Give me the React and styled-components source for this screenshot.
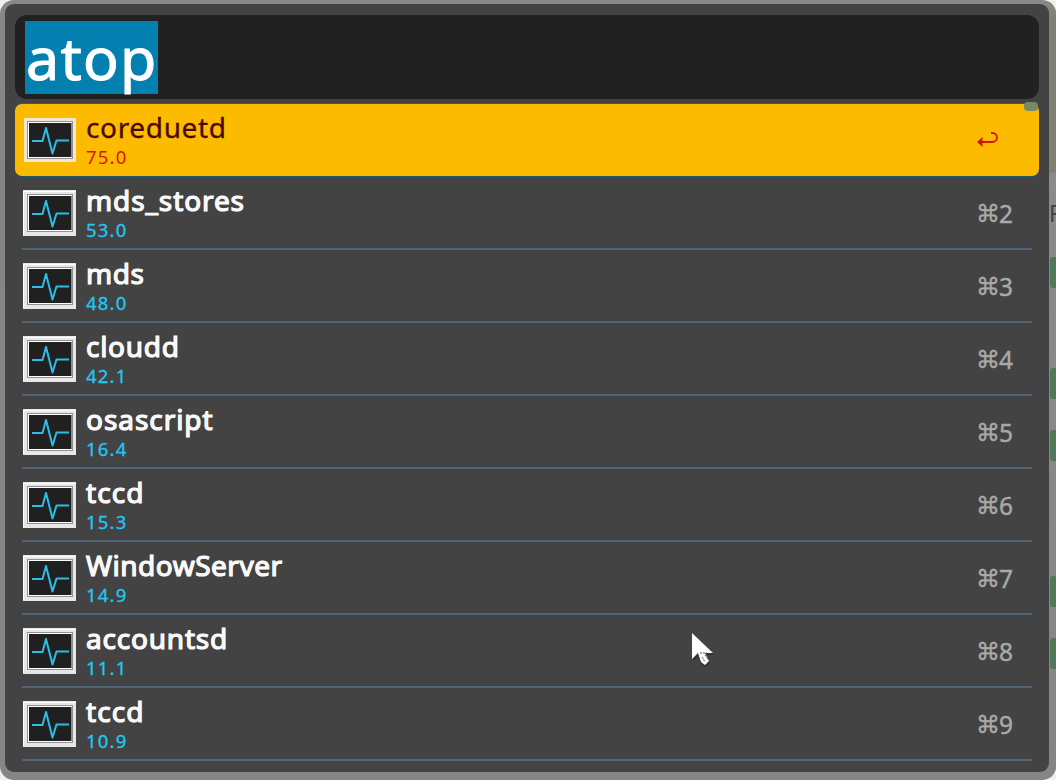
import React from "react";
import styled, { createGlobalStyle } from "styled-components";

const Global = createGlobalStyle`
  * { box-sizing: border-box; }
  html, body { margin: 0; background: #f1f0ec; overflow: hidden; }
`;

const sans = `"Noto Sans", "Open Sans", "DejaVu Sans", sans-serif`;

const Desktop = styled.main`
  position: relative;
  width: 1056px;
  height: 780px;
  padding: 4px 7px 8px 5px;
  border-radius: 14px;
  overflow: hidden;
  background: linear-gradient(to bottom, #888986 0, #858583 172px, #868686 100%);
  font-family: ${sans};
`;

const Behind = styled.div`
  position: absolute;
  top: 0;
  right: 0;
  width: 7px;
  height: 780px;
  overflow: hidden;
  background: linear-gradient(to bottom, #888986 0, #7f7f72 20px, #7f7f72 172px, #8a8a8a 173px, #858585 100%);
`;

const Tag = styled.i`
  position: absolute;
  left: 1px;
  top: ${(p) => p.$top}px;
  width: 20px;
  height: 31px;
  border-radius: 3px;
  background: #50795a;
`;

const Letter = styled.span`
  position: absolute;
  left: 0;
  top: 199px;
  color: #3d4343;
  font-size: 23px;
  line-height: 28px;
`;

const Panel = styled.section`
  position: relative;
  height: 768px;
  padding: 11px 10px 0;
  border-radius: 9px;
  background: #434343;
`;

const Search = styled.div`
  height: 84px;
  padding: 6px 10px;
  border-radius: 12px;
  background: #212121;
`;

const Query = styled.span`
  display: block;
  width: 133px;
  height: 73px;
  padding-left: 1px;
  background: #0380af;
  color: #fff;
  font-size: 59px;
  line-height: 73px;
  letter-spacing: 1.3px;
  white-space: nowrap;
  -webkit-text-stroke: 1px #fff;
`;

const List = styled.ul`
  margin: 5px 0 0;
  padding: 0;
  list-style: none;
`;

const Row = styled.li`
  position: relative;
  display: flex;
  height: 73px;
  margin: ${(p) => (p.$active ? "0" : "0 7px")};
  padding: ${(p) => (p.$active ? "0 25px 0 9px" : "0 18px 0 1px")};
  ${(p) =>
    p.$active
      ? `height: 72px; margin-bottom: 1px; background: #fdbb00; border-radius: 7px; box-shadow: 0 -1px 0 #2c5b6c, 0 1px 0 #22566b;`
      : `border-bottom: 2px solid #50657a;`}
`;

const Icon = styled.svg`
  flex: none;
  width: 53px;
  height: 46px;
  margin-top: 13px;
  margin-left: ${(p) => (p.$active ? -1 : 0)}px;
`;

const Labels = styled.div`
  flex: 1;
  padding-left: 10px;
`;

const Title = styled.div`
  height: 41px;
  color: ${(p) => (p.$active ? "#4a0a00" : "#f4f4f4")};
  font-size: 28px;
  line-height: 47px;
  letter-spacing: ${(p) => p.$track}px;
  white-space: nowrap;
  -webkit-text-stroke: ${(p) => (p.$active ? "0.3px #4a0a00" : "1.2px #fff")};
`;

const Value = styled.div`
  color: ${(p) => (p.$active ? "#d51800" : "#21c8f4")};
  font-size: 18.5px;
  line-height: 24px;
  letter-spacing: 1.2px;
  -webkit-text-stroke: ${(p) => (p.$active ? 0 : 0.3)}px currentColor;
`;

const Shortcut = styled.div`
  display: flex;
  align-items: center;
  width: 38px;
  height: ${(p) => (p.$active ? 71 : 73)}px;
  color: #a9a9a9;
  font-size: 24.5px;
  white-space: nowrap;
  -webkit-text-stroke: 0.4px currentColor;
`;

const Command = styled.span`
  width: 23px;
  font-family: "DejaVu Sans", sans-serif;
  font-size: 24px;
`;

const ReturnIcon = styled.svg`
  width: 22px;
  height: 18px;
  margin-left: 1px;
`;

const Scroller = styled.i`
  position: absolute;
  top: -2px;
  right: 1px;
  width: 14px;
  height: 9px;
  border-radius: 4px;
  background: #788765;
`;

const Pointer = styled.svg`
  position: absolute;
  left: 690px;
  top: 631px;
  width: 26px;
  height: 38px;
`;

const rows = [
  ["coreduetd", "75.0", 0.65],
  ["mds_stores", "53.0", 0.9],
  ["mds", "48.0", 0.6],
  ["cloudd", "42.1", 0.7],
  ["osascript", "16.4", 0.95],
  ["tccd", "15.3", 1.1],
  ["WindowServer", "14.9", 0.5],
  ["accountsd", "11.1", 0.8],
  ["tccd", "10.9", 1.1],
];

function Monitor({ active }) {
  return (
    <Icon viewBox="0 0 53 46" $active={active}>
      <rect x={active ? 1 : 0} y={active ? 1 : 0} width={active ? 52 : 53} height={active ? 44 : 46} fill={active ? "#efe6d4" : "#e7e7e7"} />
      {!active && <path d="M.5 45V1.5H53" fill="none" stroke="#fff" />}
      <rect x="4.5" y="4.5" width="45" height="37" fill="#fff" stroke="#909090" />
      <rect x="6" y="6" width="42.5" height="34" fill="#202020" />
      <path d="M9 24h10.500L23 11l6.500 25.500L33.500 23.500H46" fill="none" stroke="#2fbde6" strokeWidth="2" strokeLinejoin="round" />
    </Icon>
  );
}

export default function App() {
  return (
    <>
      <Global />
      <Desktop>
        <Behind>
          <Letter>P</Letter>
          {[257, 368, 430, 576, 638].map((top) => (
            <Tag key={top} $top={top} />
          ))}
        </Behind>
        <Panel>
          <Search>
            <Query>atop</Query>
          </Search>
          <List>
            {rows.map(([name, value, track], i) => {
              const active = i === 0;
              return (
                <Row key={i} $active={active}>
                  <Monitor active={active} />
                  <Labels>
                    <Title $active={active} $track={track}>{name}</Title>
                    <Value $active={active}>{value}</Value>
                  </Labels>
                  <Shortcut $active={active}>
                    {active ? (
                      <ReturnIcon viewBox="0 0 22 18">
                        <path d="M3 11h12.500a4.500 4.500 0 0 0 0-9h-1.500" fill="none" stroke="#d21400" strokeWidth="1.800" />
                        <path d="M0 11l5.500-5v10z" fill="#d21400" />
                      </ReturnIcon>
                    ) : (
                      <>
                        <Command>⌘</Command>
                        {i + 1}
                      </>
                    )}
                  </Shortcut>
                  {active && <Scroller />}
                </Row>
              );
            })}
          </List>
        </Panel>
        <Pointer viewBox="0 0 26 38">
          <path d="M2 2v27l5-5 3 8 5 3 4-4-4-8h8z" fill="#222" opacity=".5" transform="translate(1 1)" />
          <path d="M2 2v26l6-6 3 9 4 3 4-4-4-8h8z" fill="#fff" />
          <path d="M10 22h7M12 26l3 5m0-7l3 4" fill="none" stroke="#555" strokeDasharray="2 1" />
        </Pointer>
      </Desktop>
    </>
  );
}
